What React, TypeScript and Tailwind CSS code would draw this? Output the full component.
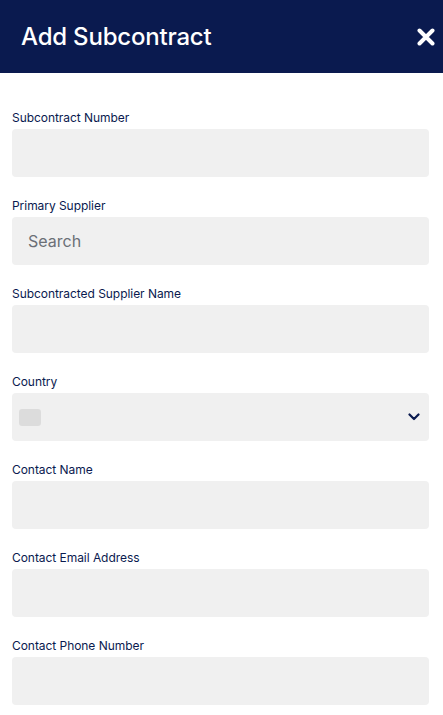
import React from "react";

const Field = ({ label, children }: { label: string; children?: React.ReactNode }) => (
  <div className="flex flex-col">
    <label className="text-[12px] leading-[16px] text-[#0a1a4f] mb-[3px] tracking-[-0.05px]">{label}</label>
    {children ?? <div className="h-[48px] rounded-[4px] bg-[#f0f0f0]" />}
  </div>
);

export default function App() {
  return (
    <div className="w-[443px] h-[715px] overflow-hidden bg-white" style={{ fontFamily: "Inter, 'Noto Sans', sans-serif" }}>
      <div className="h-[73px] bg-[#0a1a4f] flex items-center justify-between pl-[21px] pr-[7px]">
        <h1 className="text-white text-[24px] font-medium tracking-[-0.2px]">Add Subcontract</h1>
        <svg width="18" height="18" viewBox="0 0 18 18" className="mr-[1px]">
          <path d="M2.5 2.5 L15.5 15.5 M15.5 2.5 L2.5 15.5" stroke="white" strokeWidth="4" strokeLinecap="round" />
        </svg>
      </div>
      <div className="pt-[37px] pl-[12px] pr-[14px] flex flex-col gap-[21px]">
        <Field label="Subcontract Number" />
        <Field label="Primary Supplier">
          <div className="h-[48px] rounded-[4px] bg-[#f0f0f0] flex items-center pl-[16px] text-[16px] text-[#6b6f76]">Search</div>
        </Field>
        <Field label="Subcontracted Supplier Name" />
        <Field label="Country">
          <div className="h-[48px] rounded-[4px] bg-[#f0f0f0] flex items-center justify-between pl-[7px] pr-[9px]">
            <div className="w-[22px] h-[17px] rounded-[3px] bg-[#dcdcdc]" />
            <svg width="12" height="8" viewBox="0 0 12 8">
              <path d="M1.5 1.5 L6 6 L10.5 1.5" stroke="#0a1a4f" strokeWidth="2.2" fill="none" strokeLinecap="round" strokeLinejoin="round" />
            </svg>
          </div>
        </Field>
        <Field label="Contact Name" />
        <Field label="Contact Email Address" />
        <Field label="Contact Phone Number" />
      </div>
    </div>
  );
}
